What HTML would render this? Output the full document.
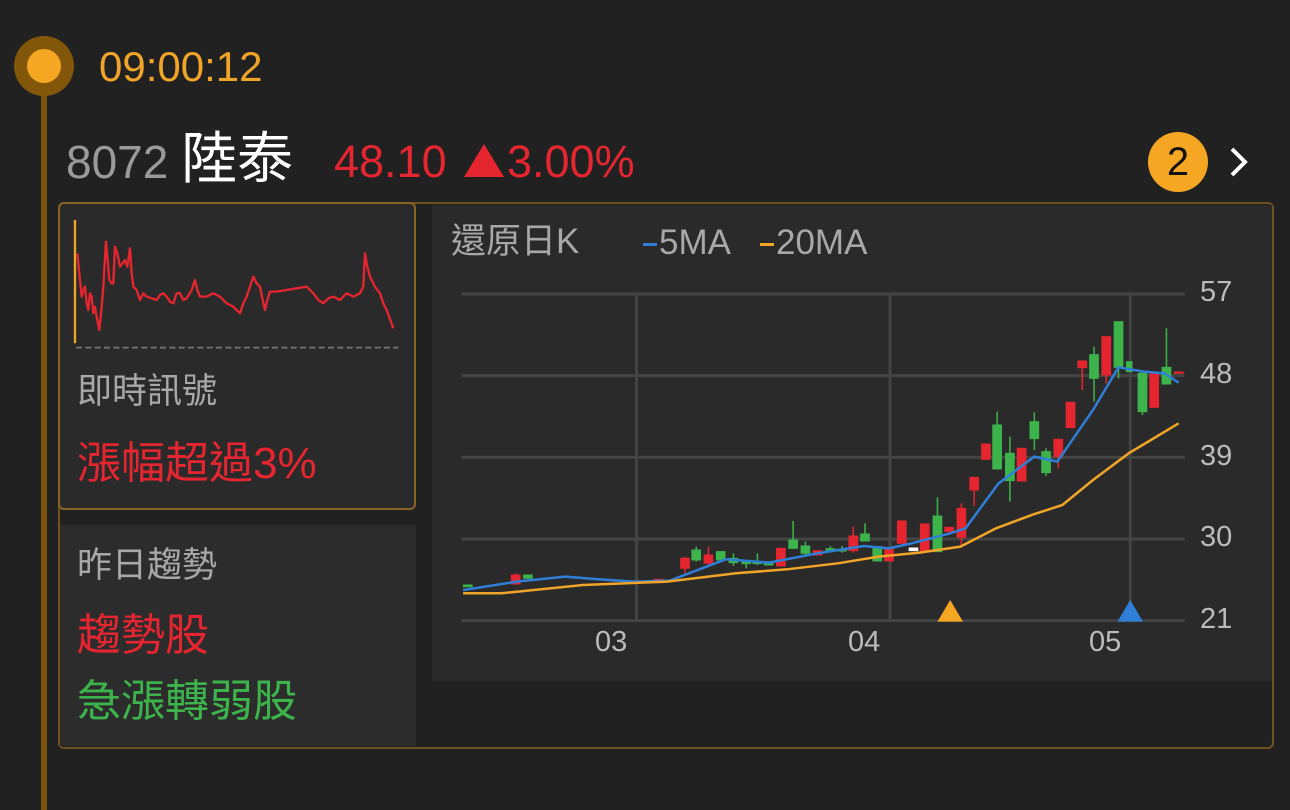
<!DOCTYPE html>
<html><head><meta charset="utf-8"><style>
body{margin:0;width:1290px;height:810px;background:#212121;overflow:hidden;position:relative;font-family:"Liberation Sans","Noto Sans CJK TC",sans-serif}
.a{position:absolute;white-space:nowrap;line-height:1}
</style></head><body>
<div class="a" style="left:41px;top:66px;width:6px;height:744px;background:#7d540c"></div>
<div class="a" style="left:14px;top:36px;width:60px;height:60px;border-radius:50%;background:#83570a"></div>
<div class="a" style="left:27px;top:49px;width:34px;height:34px;border-radius:50%;background:#f5a623"></div>
<div class="a" style="left:99px;top:46px;font-size:42px;color:#f0a428">09:00:12</div>
<div class="a" style="left:66px;top:139px;font-size:46px;color:#9a9a9a">8072</div>
<div class="a" style="left:181px;top:131px;font-size:56px;color:#fff">陸泰</div>
<div class="a" style="left:334px;top:139px;font-size:45px;color:#e5252f">48.10</div>
<svg class="a" style="left:463px;top:142px" width="42" height="36"><polygon points="21,2 41,35 1,35" fill="#e5252f"/></svg>
<div class="a" style="left:507px;top:139px;font-size:45px;color:#e5252f">3.00%</div>
<div class="a" style="left:1148px;top:132px;width:60px;height:60px;border-radius:50%;background:#f5a623;color:#111;font-size:40px;text-align:center;line-height:60px">2</div>
<svg class="a" style="left:1226px;top:146px" width="28" height="32"><path d="M6 3 L19 16 L6 29" fill="none" stroke="#fff" stroke-width="4"/></svg>
<div class="a" style="left:58px;top:202px;width:1212px;height:543px;border:2px solid #6e5220;border-radius:6px"></div>
<div class="a" style="left:58px;top:202px;width:354px;height:304px;border:2px solid #8a6424;border-radius:6px;background:#2a2a2a"></div>
<div class="a" style="left:60px;top:525px;width:356px;height:221px;background:#2c2c2c"></div>
<div class="a" style="left:432px;top:205px;width:840px;height:476px;background:#2a2a2a"></div>
<svg class="a" style="left:0;top:20px" width="440" height="340">
<g transform="scale(0.3333)">
<line x1="225" y1="600" x2="225" y2="970" stroke="#f0a428" stroke-width="7"/>
<line x1="228" y1="983" x2="1195" y2="983" stroke="#777" stroke-width="5" stroke-dasharray="18,10"/>
<polyline fill="none" stroke="#e5252f" stroke-width="7" stroke-linejoin="round" points="232,700 240,780 245,830 250,810 255,800 260,850 265,870 270,820 275,830 280,880 285,860 290,890 298,930 305,860 310,800 318,665 323,720 328,780 335,790 340,790 345,680 352,700 360,740 368,730 375,720 382,740 390,685 395,760 400,800 410,810 420,840 430,820 440,830 455,835 470,840 480,825 490,820 500,830 510,845 520,850 530,820 540,820 550,840 560,835 575,810 585,780 592,810 600,830 620,830 640,820 660,830 680,850 700,860 720,880 730,850 740,830 750,800 760,770 770,790 780,800 788,840 795,870 802,840 810,815 830,815 860,810 890,805 920,800 930,810 940,820 955,840 970,850 985,835 1000,830 1020,840 1040,820 1060,830 1080,820 1090,800 1095,700 1102,740 1110,770 1125,800 1140,820 1150,850 1160,870 1180,925"/>
</g></svg>
<div class="a" style="left:77px;top:374px;font-size:35px;color:#a8a8a8">即時訊號</div>
<div class="a" style="left:77px;top:442px;font-size:44px;color:#e5252f">漲幅超過3%</div>
<div class="a" style="left:77px;top:548px;font-size:35px;color:#a8a8a8">昨日趨勢</div>
<div class="a" style="left:77px;top:614px;font-size:44px;color:#e5252f">趨勢股</div>
<div class="a" style="left:77px;top:680px;font-size:44px;color:#3cb44b">急漲轉弱股</div>
<div class="a" style="left:451px;top:224px;font-size:35px;color:#a8a8a8">還原日K</div>
<div class="a" style="left:643px;top:225px;font-size:35px;color:#a8a8a8"><span style="display:inline-block;width:14px;height:3px;background:#2f7fd8;vertical-align:middle;margin-right:2px"></span>5MA</div>
<div class="a" style="left:760px;top:225px;font-size:35px;color:#a8a8a8"><span style="display:inline-block;width:14px;height:3px;background:#f0a428;vertical-align:middle;margin-right:2px"></span>20MA</div>
<div class="a" style="left:1200px;top:278px;font-size:29px;color:#bbb">57</div>
<div class="a" style="left:1200px;top:360px;font-size:29px;color:#bbb">48</div>
<div class="a" style="left:1200px;top:442px;font-size:29px;color:#bbb">39</div>
<div class="a" style="left:1200px;top:523px;font-size:29px;color:#bbb">30</div>
<div class="a" style="left:1200px;top:605px;font-size:29px;color:#bbb">21</div>
<div class="a" style="left:595px;top:628px;font-size:29px;color:#bbb">03</div>
<div class="a" style="left:848px;top:628px;font-size:29px;color:#bbb">04</div>
<div class="a" style="left:1089px;top:628px;font-size:29px;color:#bbb">05</div>
<svg class="a" style="left:430px;top:280px" width="800" height="360">
<g transform="scale(0.51,0.3333)">
<g stroke="#444" stroke-width="3">
<line x1="62" y1="42" x2="1480" y2="42" vector-effect="non-scaling-stroke"/><line x1="62" y1="287" x2="1480" y2="287" vector-effect="non-scaling-stroke"/><line x1="62" y1="532" x2="1480" y2="532" vector-effect="non-scaling-stroke"/><line x1="62" y1="777" x2="1480" y2="777" vector-effect="non-scaling-stroke"/><line x1="62" y1="1022" x2="1480" y2="1022" vector-effect="non-scaling-stroke"/>
<line x1="405" y1="42" x2="405" y2="1022" vector-effect="non-scaling-stroke"/><line x1="902" y1="42" x2="902" y2="1022" vector-effect="non-scaling-stroke"/><line x1="1373" y1="42" x2="1373" y2="1022" vector-effect="non-scaling-stroke"/>
</g>
<g stroke-width="3">
<g fill="#e5252f" stroke="#e5252f">
<line x1="168" y1="880" x2="168" y2="915"/><rect x="160" y="885" width="16" height="27"/>
<rect x="440" y="898" width="16" height="10"/>
<line x1="500" y1="830" x2="500" y2="880"/><rect x="492" y="835" width="16" height="30"/>
<line x1="546" y1="800" x2="546" y2="860"/><rect x="538" y="825" width="16" height="25"/>
<rect x="680" y="805" width="16" height="53"/>
<rect x="752" y="812" width="16" height="13"/>
<line x1="830" y1="740" x2="830" y2="818"/><rect x="822" y="768" width="16" height="44"/>
<rect x="892" y="808" width="16" height="35"/>
<rect x="917" y="723" width="16" height="67"/>
<rect x="962" y="732" width="16" height="83"/>
<rect x="1010" y="742" width="16" height="13"/>
<line x1="1042" y1="670" x2="1042" y2="800"/><rect x="1034" y="685" width="16" height="87"/>
<line x1="1067" y1="592" x2="1067" y2="678"/><rect x="1059" y="592" width="16" height="38"/>
<rect x="1082" y="492" width="16" height="46"/>
<rect x="1152" y="505" width="16" height="98"/>
<line x1="1232" y1="478" x2="1232" y2="565"/><rect x="1224" y="478" width="16" height="52"/>
<rect x="1248" y="367" width="16" height="76"/>
<line x1="1279" y1="243" x2="1279" y2="330"/><rect x="1271" y="243" width="16" height="20"/>
<line x1="1326" y1="170" x2="1326" y2="310"/><rect x="1318" y="170" width="16" height="115"/>
<rect x="1412" y="278" width="16" height="104"/>
<rect x="1460" y="276" width="16" height="4"/>
</g>
<g fill="#3cb44b" stroke="#3cb44b">
<rect x="66" y="915" width="16" height="5"/>
<rect x="184" y="885" width="16" height="10"/>
<line x1="522" y1="800" x2="522" y2="845"/><rect x="514" y="810" width="16" height="30"/>
<rect x="562" y="815" width="16" height="25"/>
<line x1="595" y1="820" x2="595" y2="858"/><rect x="587" y="835" width="16" height="13"/>
<line x1="620" y1="840" x2="620" y2="865"/><rect x="612" y="846" width="16" height="5"/>
<line x1="642" y1="820" x2="642" y2="855"/><rect x="634" y="846" width="16" height="5"/>
<rect x="656" y="845" width="16" height="10"/>
<line x1="712" y1="723" x2="712" y2="805"/><rect x="704" y="780" width="16" height="25"/>
<line x1="736" y1="785" x2="736" y2="830"/><rect x="728" y="798" width="16" height="22"/>
<line x1="785" y1="798" x2="785" y2="818"/><rect x="777" y="806" width="16" height="5"/>
<line x1="808" y1="798" x2="808" y2="818"/><rect x="800" y="808" width="16" height="5"/>
<line x1="853" y1="730" x2="853" y2="783"/><rect x="845" y="762" width="16" height="21"/>
<rect x="869" y="800" width="16" height="43"/>
<rect x="940" y="804" width="16" height="8" fill="#fff" stroke="#fff"/>
<line x1="995" y1="652" x2="995" y2="815"/><rect x="987" y="708" width="16" height="107"/>
<line x1="1112" y1="395" x2="1112" y2="567"/><rect x="1104" y="435" width="16" height="132"/>
<line x1="1137" y1="470" x2="1137" y2="665"/><rect x="1129" y="520" width="16" height="82"/>
<line x1="1185" y1="397" x2="1185" y2="510"/><rect x="1177" y="425" width="16" height="51"/>
<line x1="1208" y1="505" x2="1208" y2="588"/><rect x="1200" y="515" width="16" height="63"/>
<line x1="1302" y1="200" x2="1302" y2="365"/><rect x="1294" y="224" width="16" height="71"/>
<line x1="1350" y1="125" x2="1350" y2="295"/><rect x="1342" y="125" width="16" height="137"/>
<rect x="1366" y="245" width="10" height="30"/>
<line x1="1397" y1="280" x2="1397" y2="405"/><rect x="1389" y="280" width="16" height="115"/>
<line x1="1444" y1="145" x2="1444" y2="312"/><rect x="1436" y="262" width="16" height="50"/>
</g></g>
<polyline fill="none" stroke="#2f7fd8" stroke-width="2.5" vector-effect="non-scaling-stroke" points="65,930 170,905 265,890 330,898 400,905 470,902 580,838 665,848 760,820 850,798 900,805 945,790 1020,760 1050,745 1115,610 1185,530 1230,545 1300,390 1350,262 1400,275 1440,280 1468,308"/>
<polyline fill="none" stroke="#f0a428" stroke-width="2.5" vector-effect="non-scaling-stroke" points="65,940 140,940 300,915 465,905 600,880 700,868 800,850 880,830 960,818 1040,800 1110,745 1180,705 1240,675 1300,600 1370,520 1468,430"/>
<polygon points="1020,960 995,1025 1045,1025" fill="#f5a623"/>
<polygon points="1373,960 1348,1025 1398,1025" fill="#2f7fd8"/>
</g></svg>
</body></html>
